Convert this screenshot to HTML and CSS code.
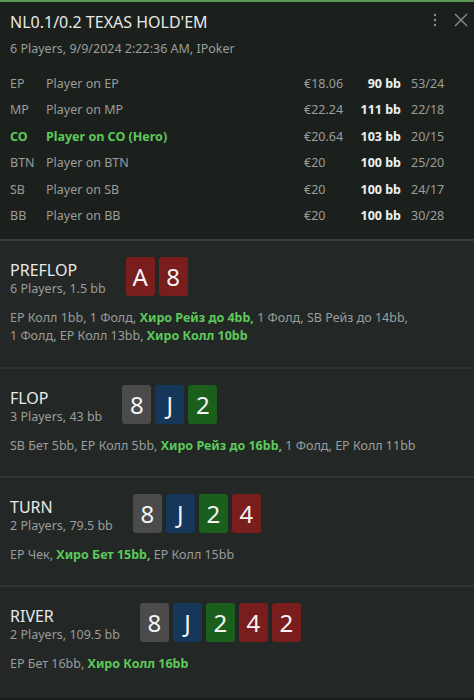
FILE: index.html
```html
<!DOCTYPE html>
<html>
<head>
<meta charset="utf-8">
<link rel="stylesheet" href="styles.css">
</head>
<body>
<div class="panel">
  <header class="head">
    <div class="head-top">
      <div class="title">NL0.1/0.2 TEXAS HOLD'EM</div>
      <div class="tools">
        <svg class="dots" width="4" height="14" viewBox="0 0 4 14"><circle cx="2" cy="2" r="1.2"/><circle cx="2" cy="7" r="1.2"/><circle cx="2" cy="12" r="1.2"/></svg>
        <svg class="close" width="14" height="14" viewBox="0 0 14 14"><path d="M1 1 L13 13 M13 1 L1 13"/></svg>
      </div>
    </div>
    <div class="sub">6 Players, 9/9/2024 2:22:36 AM, IPoker</div>
    <div class="players">
      <div class="prow"><span>EP</span><span>Player on EP</span><span>€18.06</span><span class="bb">90 bb</span><span class="st">53/24</span></div>
      <div class="prow"><span>MP</span><span>Player on MP</span><span>€22.24</span><span class="bb">111 bb</span><span class="st">22/18</span></div>
      <div class="prow hero"><span>CO</span><span>Player on CO (Hero)</span><span>€20.64</span><span class="bb">103 bb</span><span class="st">20/15</span></div>
      <div class="prow"><span>BTN</span><span>Player on BTN</span><span>€20</span><span class="bb">100 bb</span><span class="st">25/20</span></div>
      <div class="prow"><span>SB</span><span>Player on SB</span><span>€20</span><span class="bb">100 bb</span><span class="st">24/17</span></div>
      <div class="prow"><span>BB</span><span>Player on BB</span><span>€20</span><span class="bb">100 bb</span><span class="st">30/28</span></div>
    </div>
  </header>

  <section class="street first">
    <div class="street-head">
      <div class="street-info">
        <div class="street-name">PREFLOP</div>
        <div class="street-sub">6 Players, 1.5 bb</div>
      </div>
      <div class="cards"><span class="card red">A</span><span class="card red">8</span></div>
    </div>
    <div class="actions">EP Колл 1bb, 1&nbsp;Фолд, <b>Хиро Рейз до 4bb,</b> 1&nbsp;Фолд, SB Рейз до 14bb, 1&nbsp;Фолд, EP Колл 13bb, <b>Хиро Колл 10bb</b></div>
  </section>

  <section class="street">
    <div class="street-head">
      <div class="street-info">
        <div class="street-name">FLOP</div>
        <div class="street-sub">3 Players, 43 bb</div>
      </div>
      <div class="cards"><span class="card gray">8</span><span class="card blue">J</span><span class="card green">2</span></div>
    </div>
    <div class="actions">SB Бет 5bb, EP Колл 5bb, <b>Хиро Рейз до 16bb,</b> 1&nbsp;Фолд, EP Колл 11bb</div>
  </section>

  <section class="street">
    <div class="street-head">
      <div class="street-info">
        <div class="street-name">TURN</div>
        <div class="street-sub">2 Players, 79.5 bb</div>
      </div>
      <div class="cards"><span class="card gray">8</span><span class="card blue">J</span><span class="card green">2</span><span class="card red">4</span></div>
    </div>
    <div class="actions">EP Чек, <b>Хиро Бет 15bb,</b> EP Колл 15bb</div>
  </section>

  <section class="street last">
    <div class="street-head">
      <div class="street-info">
        <div class="street-name">RIVER</div>
        <div class="street-sub">2 Players, 109.5 bb</div>
      </div>
      <div class="cards"><span class="card gray">8</span><span class="card blue">J</span><span class="card green">2</span><span class="card red">4</span><span class="card red">2</span></div>
    </div>
    <div class="actions">EP Бет 16bb, <b>Хиро Колл 16bb</b></div>
  </section>
</div>
</body>
</html>
```

FILE: styles.css
```css
* { box-sizing: border-box; }
html, body {
  margin: 0;
  padding: 0;
  background: #1a1f1c;
}
body {
  font-family: "Noto Sans", "Open Sans", sans-serif;
  color: #9a9d9b;
  width: 474px;
  height: 700px;
  overflow: hidden;
}
.panel {
  border-top: 2px solid #5b9b57;
  background: #232826;
  height: 698px;
}
.head {
  background: #1b201d;
  padding: 9px 10px 10px 10px;
  border-bottom: 2px solid #383d3a;
}
.head-top {
  display: flex;
  justify-content: space-between;
  align-items: flex-start;
}
.title {
  color: #e8e9e8;
  font-size: 16px;
  line-height: 22px;
}
.tools {
  display: flex;
  align-items: center;
  gap: 17px;
  padding-top: 2px;
  margin-right: -4px;
}
.dots { fill: #8b8e8c; }
.close { stroke: #8b8e8c; stroke-width: 1.4; fill: none; }
.sub {
  font-size: 12.5px;
  line-height: 18px;
  margin-top: 7px;
}
.players {
  margin-top: 13px;
}
.prow {
  display: grid;
  grid-template-columns: 36px 258px 46px 51px 1fr;
  font-size: 12.5px;
  height: 26.4px;
  line-height: 26.4px;
  white-space: nowrap;
}
.prow .bb {
  color: #f0f0f0;
  font-weight: 700;
  text-align: right;
}
.prow .st { padding-left: 10px; }
.prow.hero span:nth-child(1),
.prow.hero span:nth-child(2) {
  color: #5dc95a;
  font-weight: 700;
}
.street {
  padding: 16px 10px 21px 10px;
  border-bottom: 2px solid #313633;
}
.street.first { padding-bottom: 22px; }
.street.last { border-bottom: none; }
.street-head {
  display: flex;
  gap: 20px;
  align-items: flex-start;
}
.street-name {
  color: #e8e9e8;
  font-size: 16px;
  line-height: 22px;
  margin-top: 2px;
}
.street-sub {
  font-size: 12.5px;
  line-height: 15px;
}
.cards {
  display: flex;
  gap: 4px;
}
.card {
  width: 29px;
  height: 39px;
  border-radius: 3px;
  color: #f4f4f4;
  font-size: 24px;
  line-height: 39px;
  text-align: center;
}
.card.red { background: #7a1d1d; }
.card.blue { background: #17375a; }
.card.green { background: #1a601c; }
.card.gray { background: #4b4b4b; }
.actions {
  margin-top: 13px;
  font-size: 12.5px;
  line-height: 18px;
  padding-right: 10px;
}
.actions b {
  color: #5dc95a;
  font-weight: 700;
}
```
